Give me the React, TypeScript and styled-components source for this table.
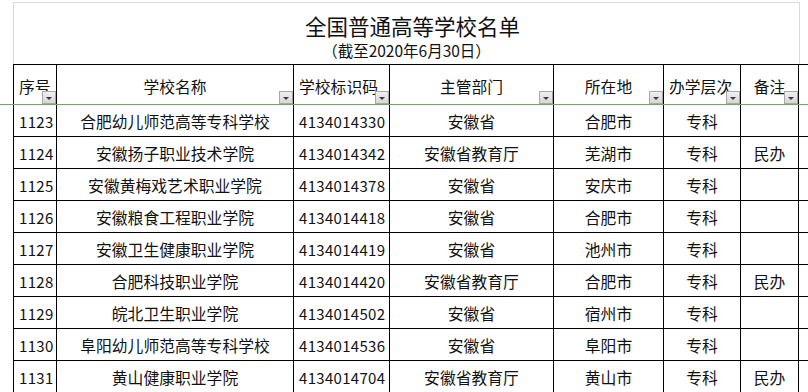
import styled, { createGlobalStyle } from 'styled-components';

const GlobalStyle = createGlobalStyle`
  html, body {
    margin: 0;
    padding: 0;
    background: #ffffff;
  }
  body {
    font-family: "Noto Sans CJK SC", "Liberation Sans", sans-serif;
    color: #111111;
    overflow: hidden;
  }
`;

const COLS = '43px 237px 96px 164px 110px 77px 59px';

const Sheet = styled.div`
  width: 808px;
  height: 392px;
  padding-top: 2px;
  box-sizing: border-box;
  overflow: hidden;
`;

const TitleBlock = styled.div`
  margin-left: 13px;
  width: 787px;
  height: 62px;
  box-sizing: border-box;
  border-top: 1px solid #d9d9d9;
  border-left: 1px solid #d9d9d9;
  border-right: 1px solid #d9d9d9;
  display: flex;
  flex-direction: column;
  align-items: center;
  padding-top: 10px;
`;

const Title = styled.div`
  font-size: 21.5px;
  line-height: 26px;
  margin-left: 12px;
`;

const SubTitle = styled.div`
  font-size: 15.5px;
  line-height: 20px;
  margin-top: 1px;
`;

// full-width band so the freeze line runs past the table edges
const HeaderBand = styled.div`
  width: 808px;
  border-bottom: 1px solid #74a769;
`;

const Row = styled.div<{ $head?: boolean }>`
  display: grid;
  grid-template-columns: ${COLS};
  margin-left: 13px;
  height: ${(p) => (p.$head ? '40px' : '32px')};
  box-sizing: border-box;
  border-top: ${(p) => (p.$head ? '1px solid #000' : 'none')};
  border-bottom: ${(p) => (p.$head ? 'none' : '1px solid #000')};
`;

const Cell = styled.div<{ $align?: 'left' | 'center'; $last?: boolean; $head?: boolean }>`
  position: relative;
  box-sizing: border-box;
  border-left: 1px solid #000;
  border-right: ${(p) => (p.$last ? '1px solid #000' : 'none')};
  display: flex;
  align-items: center;
  justify-content: ${(p) => (p.$align === 'left' ? 'flex-start' : 'center')};
  padding-left: ${(p) => (p.$align === 'left' ? '5px' : '0')};
  padding-top: ${(p) => (p.$head ? '3px' : '2px')};
  font-size: 15.8px;
  white-space: nowrap;
  overflow: visible;
`;

const Num = styled.span`
  font-size: 15px;
  letter-spacing: 0.3px;
`;

const FilterButton = styled.span`
  position: absolute;
  right: 0;
  bottom: 0;
  width: 14px;
  height: 13px;
  box-sizing: border-box;
  border: 1px solid #a8a8a8;
  background: linear-gradient(#f0f0f0, #d6d6d6);
  display: flex;
  align-items: center;
  justify-content: center;

  &::after {
    content: '';
    width: 0;
    height: 0;
    border-left: 3px solid transparent;
    border-right: 3px solid transparent;
    border-top: 3px solid #3a3a3a;
    margin-top: 1px;
  }
`;

const headers: { label: string; align: 'left' | 'center' }[] = [
  { label: '序号', align: 'left' },
  { label: '学校名称', align: 'center' },
  { label: '学校标识码', align: 'left' },
  { label: '主管部门', align: 'center' },
  { label: '所在地', align: 'center' },
  { label: '办学层次', align: 'left' },
  { label: '备注', align: 'center' },
];

const rows = [
  ['1123', '合肥幼儿师范高等专科学校', '4134014330', '安徽省', '合肥市', '专科', ''],
  ['1124', '安徽扬子职业技术学院', '4134014342', '安徽省教育厅', '芜湖市', '专科', '民办'],
  ['1125', '安徽黄梅戏艺术职业学院', '4134014378', '安徽省', '安庆市', '专科', ''],
  ['1126', '安徽粮食工程职业学院', '4134014418', '安徽省', '合肥市', '专科', ''],
  ['1127', '安徽卫生健康职业学院', '4134014419', '安徽省', '池州市', '专科', ''],
  ['1128', '合肥科技职业学院', '4134014420', '安徽省教育厅', '合肥市', '专科', '民办'],
  ['1129', '皖北卫生职业学院', '4134014502', '安徽省', '宿州市', '专科', ''],
  ['1130', '阜阳幼儿师范高等专科学校', '4134014536', '安徽省', '阜阳市', '专科', ''],
  ['1131', '黄山健康职业学院', '4134014704', '安徽省教育厅', '黄山市', '专科', '民办'],
];

const bodyAlign: ('left' | 'center')[] = ['left', 'center', 'left', 'center', 'center', 'center', 'center'];

const App = () => {
  return (
    <>
      <GlobalStyle />
      <Sheet>
        <TitleBlock>
          <Title>全国普通高等学校名单</Title>
          <SubTitle>（截至2020年6月30日）</SubTitle>
        </TitleBlock>
        <HeaderBand>
          <Row $head>
            {headers.map((h, i) => (
              <Cell key={h.label} $head $align={h.align} $last={i === headers.length - 1}>
                {h.label}
                <FilterButton />
              </Cell>
            ))}
          </Row>
        </HeaderBand>
        {rows.map((r) => (
          <Row key={r[0]}>
            {r.map((v, i) => (
              <Cell key={i} $align={bodyAlign[i]} $last={i === r.length - 1}>
                {i === 0 || i === 2 ? <Num>{v}</Num> : v}
              </Cell>
            ))}
          </Row>
        ))}
      </Sheet>
    </>
  );
};

export default App;
